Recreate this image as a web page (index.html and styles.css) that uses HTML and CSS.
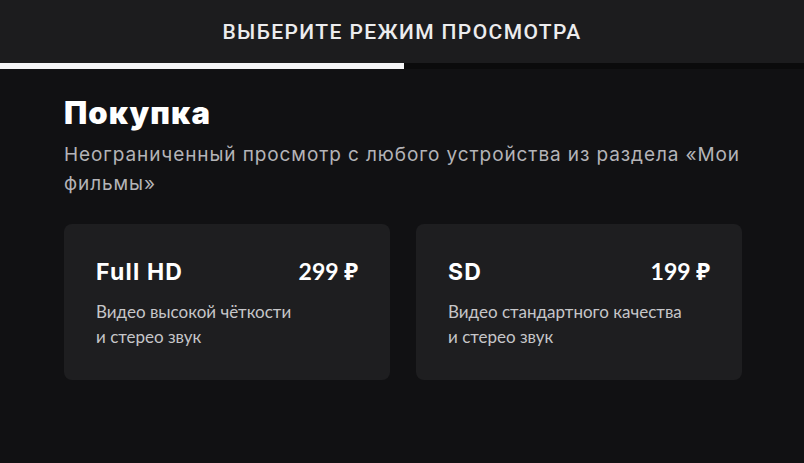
FILE: index.html
```html
<!DOCTYPE html>
<html lang="ru">
<head>
<meta charset="utf-8">
<link rel="stylesheet" href="styles.css">
</head>
<body>
<header class="header">
  <div class="header-title">Выберите режим просмотра</div>
</header>
<div class="progress"><div class="progress-fill"></div></div>
<main class="content">
  <h1 class="title">Покупка</h1>
  <p class="subtitle">Неограниченный просмотр с любого устройства из раздела «Мои фильмы»</p>
  <div class="cards">
    <div class="card">
      <div class="card-head">
        <span class="card-name">Full HD</span>
        <span class="card-price">299 ₽</span>
      </div>
      <div class="card-desc">Видео высокой чёткости<br>и стерео звук</div>
    </div>
    <div class="card">
      <div class="card-head">
        <span class="card-name">SD</span>
        <span class="card-price">199 ₽</span>
      </div>
      <div class="card-desc">Видео стандартного качества<br>и стерео звук</div>
    </div>
  </div>
</main>
</body>
</html>
```
FILE: styles.css
```css
html, body {
  margin: 0;
  padding: 0;
  background: #111113;
  color: #ffffff;
  font-family: Lato, "Noto Sans", sans-serif;
}
.header {
  height: 63px;
  background: #1c1c1e;
  display: flex;
  align-items: center;
  justify-content: center;
}
.header-title {
  font-family: Roboto, "Noto Sans", sans-serif;
  font-size: 21px;
  font-weight: 500;
  letter-spacing: 1.4px;
  text-transform: uppercase;
  color: #ececee;
}
.progress {
  height: 6px;
  background: #0b0b0c;
}
.progress-fill {
  width: 404px;
  height: 100%;
  background: #f5f5f7;
}
.content {
  padding: 0 50px 0 64px;
}
.title {
  margin: 26px 0 0;
  font-family: Inter, sans-serif;
  font-size: 31px;
  line-height: 36px;
  font-weight: 900;
  letter-spacing: 1.1px;
  color: #ffffff;
}
.subtitle {
  margin: 9px 0 0;
  font-family: Inter, sans-serif;
  font-size: 19px;
  line-height: 29px;
  letter-spacing: 0.9px;
  color: #b4b4b8;
}
.cards {
  display: grid;
  grid-template-columns: 326px 326px;
  gap: 26px;
  margin-top: 26px;
}
.card {
  background: #1e1e20;
  border-radius: 8px;
  padding: 33px 32px 30px;
  height: 156px;
  box-sizing: border-box;
}
.card-head {
  display: flex;
  justify-content: space-between;
  align-items: baseline;
  font-size: 23px;
  line-height: 28px;
  font-weight: 700;
}
.card-name {
  font-family: Inter, sans-serif;
  font-size: 23px;
  letter-spacing: 1.2px;
}
.card-desc {
  margin-top: 13px;
  font-size: 17px;
  line-height: 25px;
  color: #c6c6c9;
}
```
